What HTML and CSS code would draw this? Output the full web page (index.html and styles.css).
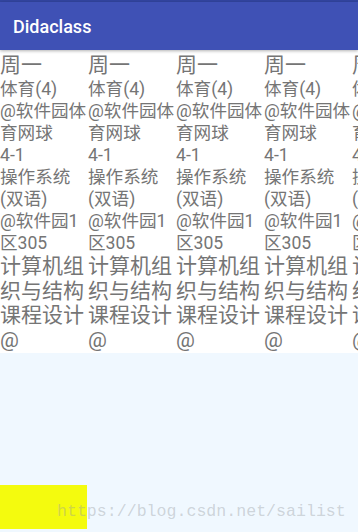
FILE: index.html
```html
<!DOCTYPE html>
<html lang="zh">
<head>
<meta charset="utf-8">
<title>Didaclass</title>
<link rel="stylesheet" href="styles.css">
</head>
<body>
<div class="status"></div>
<header class="appbar"><h1 class="title">Didaclass</h1></header>
<main class="schedule">
  <section class="day">
    <div class="day-name">周一</div>
    <div class="course"><div>体育(4)</div><div>@软件园体育网球</div><div>4-1</div></div>
    <div class="course"><div>操作系统(双语)</div><div>@软件园1区305</div></div>
    <div class="course big"><div>计算机组织与结构课程设计</div><div>@</div></div>
  </section>
  <section class="day">
    <div class="day-name">周一</div>
    <div class="course"><div>体育(4)</div><div>@软件园体育网球</div><div>4-1</div></div>
    <div class="course"><div>操作系统(双语)</div><div>@软件园1区305</div></div>
    <div class="course big"><div>计算机组织与结构课程设计</div><div>@</div></div>
  </section>
  <section class="day">
    <div class="day-name">周一</div>
    <div class="course"><div>体育(4)</div><div>@软件园体育网球</div><div>4-1</div></div>
    <div class="course"><div>操作系统(双语)</div><div>@软件园1区305</div></div>
    <div class="course big"><div>计算机组织与结构课程设计</div><div>@</div></div>
  </section>
  <section class="day">
    <div class="day-name">周一</div>
    <div class="course"><div>体育(4)</div><div>@软件园体育网球</div><div>4-1</div></div>
    <div class="course"><div>操作系统(双语)</div><div>@软件园1区305</div></div>
    <div class="course big"><div>计算机组织与结构课程设计</div><div>@</div></div>
  </section>
  <section class="day">
    <div class="day-name">周一</div>
    <div class="course"><div>体育(4)</div><div>@软件园体育网球</div><div>4-1</div></div>
    <div class="course"><div>操作系统(双语)</div><div>@软件园1区305</div></div>
    <div class="course big"><div>计算机组织与结构课程设计</div><div>@</div></div>
  </section>
</main>
<div class="filler"></div>
<div class="yellow-box"></div>
<div class="watermark">https://blog.csdn.net/sailist</div>
</body>
</html>
```

FILE: styles.css
```css
html, body {
  margin: 0;
  padding: 0;
}
body {
  width: 358px;
  height: 532px;
  overflow: hidden;
  background: #f0f8ff;
  display: flex;
  flex-direction: column;
  position: relative;
  font-family: Roboto, "Noto Sans CJK SC", sans-serif;
}
.status {
  height: 2px;
  background: #3245a0;
  flex: 0 0 auto;
}
.appbar {
  flex: 0 0 48px;
  background: #3f51b5;
  display: flex;
  align-items: center;
  padding-left: 13px;
  position: relative;
  z-index: 1;
  box-shadow: 0 1px 3px rgba(0, 0, 0, 0.3);
}
.title {
  margin: 0;
  color: #fff;
  font-size: 18px;
  font-weight: 500;
  line-height: 1;
  padding-top: 2px;
}
.schedule {
  flex: 0 0 auto;
  display: flex;
  background: #fff;
  overflow: hidden;
  padding-top: 2px;
  padding-bottom: 1px;
  color: #757575;
}
.day {
  flex: 0 0 88px;
  width: 88px;
}
.day-name {
  font-size: 21px;
  line-height: 26px;
}
.course {
  font-size: 17.6px;
  line-height: 22px;
}
.course.big {
  font-size: 21px;
  line-height: 24.5px;
}
.filler {
  flex: 1 1 auto;
}
.yellow-box {
  flex: 0 0 44px;
  width: 87px;
  background: #f4fb0e;
  margin-bottom: 3px;
}
.watermark {
  position: absolute;
  left: 57px;
  top: 502px;
  font-family: "Liberation Mono", monospace;
  font-size: 16.6px;
  line-height: 20px;
  color: rgba(150, 155, 160, 0.4);
  white-space: nowrap;
}
```
